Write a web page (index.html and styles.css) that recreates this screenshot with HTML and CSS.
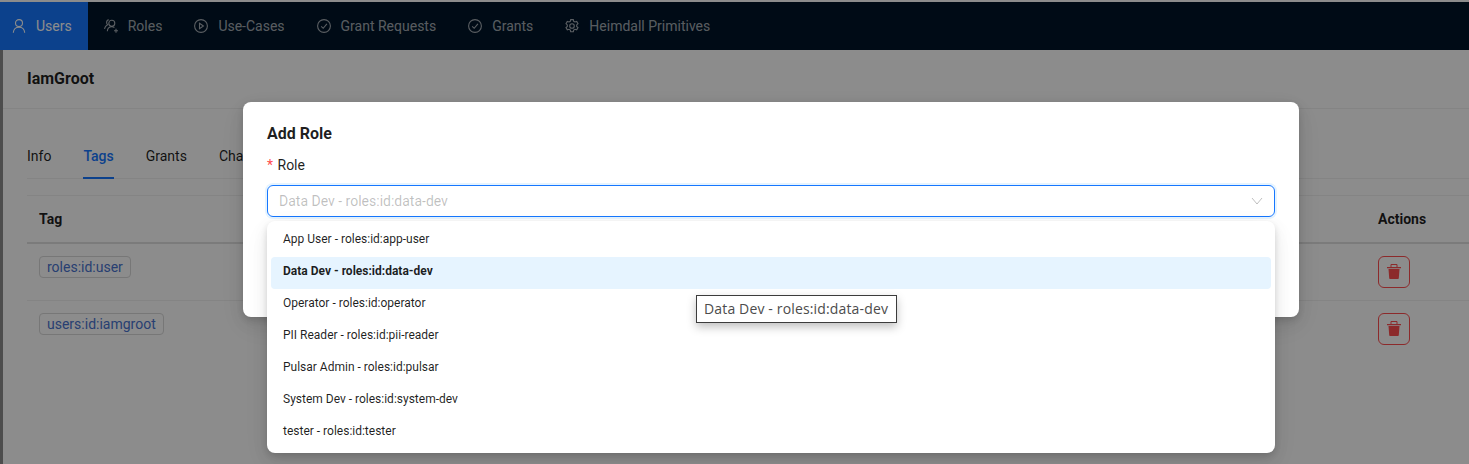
FILE: index.html
```html
<!DOCTYPE html>
<html>
<head>
    <meta charset="UTF-8">
    <meta name="viewport" content="width=device-width, initial-scale=1.0">
    <title>Users - IamGroot</title>
    <link rel="stylesheet" href="styles.css">
</head>
<body>
    <nav class="topnav">
        <a class="nav-item active">
            <svg class="nav-icon" viewBox="0 0 14 14"><circle cx="7" cy="4.100" r="3.500"/><path d="M1.300 13.800c.1-3.300 2.500-5.700 5.700-5.700s5.600 2.400 5.700 5.700"/></svg>
            Users
        </a>
        <a class="nav-item">
            <svg class="nav-icon" viewBox="0 0 14 14"><circle cx="7.800" cy="4.300" r="3"/><path d="M3.300 12.300c.2-2.700 2-4.600 4.500-4.600 1 0 1.900.3 2.600.8M4.800.8C3.500 1 2.600 2.100 2.600 3.500c0 .9.400 1.700 1 2.200C1.900 6.500.8 8 .5 9.800M10 11.700h4M12 9.700v4"/></svg>
            Roles
        </a>
        <a class="nav-item">
            <svg class="nav-icon" viewBox="0 0 14 14"><circle cx="7" cy="7" r="6.400"/><path d="M5.500 4.300 9.400 7l-3.900 2.700z"/></svg>
            Use-Cases
        </a>
        <a class="nav-item">
            <svg class="nav-icon" viewBox="0 0 14 14"><circle cx="7" cy="7" r="6.400"/><path d="M4.200 7.300 6.200 9.300 9.900 4.900"/></svg>
            Grant Requests
        </a>
        <a class="nav-item">
            <svg class="nav-icon" viewBox="0 0 14 14"><circle cx="7" cy="7" r="6.400"/><path d="M4.200 7.300 6.200 9.300 9.900 4.900"/></svg>
            Grants
        </a>
        <a class="nav-item">
            <svg class="nav-icon" viewBox="0 0 14 14"><circle cx="7" cy="7" r="2.300"/><path d="M5.700.6h2.600l.4 1.700 1.300.7 1.700-.5 1.300 2.200-1.300 1.200v1.500l1.300 1.200-1.300 2.200-1.700-.5-1.300.7-.4 1.700H5.700l-.4-1.700-1.300-.7-1.700.5-1.300-2.200 1.300-1.200V5.900L1 4.700l1.300-2.200 1.700.5 1.300-.7z"/></svg>
            Heimdall Primitives
        </a>
    </nav>

    <main class="content">
        <h1 class="page-title">IamGroot</h1>
        <div class="tabs">
            <span class="tab">Info</span>
            <span class="tab tab-active">Tags</span>
            <span class="tab">Grants</span>
            <span class="tab">Changes</span>
        </div>
        <table class="tag-table">
            <thead>
                <tr><th>Tag</th><th class="col-actions">Actions</th></tr>
            </thead>
            <tbody>
                <tr>
                    <td><span class="tag">roles:id:user</span></td>
                    <td class="col-actions"><button class="del-btn"><svg viewBox="0 0 14 15"><path d="M3.500 3V1.100C3.500.5 4 0 4.600 0h4.800c.6 0 1.100.5 1.100 1.100V3h-1V1H4.500v2zM0 3h14v1.300H0zM1.500 5h11l-.7 9c0 .6-.5 1-1 1H3.200c-.5 0-1-.4-1-1z"/></svg></button></td>
                </tr>
                <tr>
                    <td><span class="tag">users:id:iamgroot</span></td>
                    <td class="col-actions"><button class="del-btn"><svg viewBox="0 0 14 15"><path d="M3.500 3V1.100C3.500.5 4 0 4.600 0h4.800c.6 0 1.100.5 1.100 1.100V3h-1V1H4.500v2zM0 3h14v1.300H0zM1.500 5h11l-.7 9c0 .6-.5 1-1 1H3.200c-.5 0-1-.4-1-1z"/></svg></button></td>
                </tr>
            </tbody>
        </table>
    </main>

    <div class="mask"></div>

    <section class="modal">
        <h2 class="modal-title">Add Role</h2>
        <label class="field-label"><span class="req">*</span> Role</label>
        <div class="select">
            <span class="select-value">Data Dev - roles:id:data-dev</span>
            <svg class="chevron" viewBox="0 0 12 12"><path d="M1 3 6 9l5-6"/></svg>
        </div>
    </section>

    <ul class="dropdown">
        <li>App User - roles:id:app-user</li>
        <li class="selected">Data Dev - roles:id:data-dev</li>
        <li>Operator - roles:id:operator</li>
        <li>PII Reader - roles:id:pii-reader</li>
        <li>Pulsar Admin - roles:id:pulsar</li>
        <li>System Dev - roles:id:system-dev</li>
        <li>tester - roles:id:tester</li>
    </ul>

    <div class="tooltip">Data Dev - roles:id:data-dev</div>
</body>
</html>
```

FILE: styles.css
```css
* {
    margin: 0;
    padding: 0;
    box-sizing: border-box;
}

html, body {
    height: 100%;
}

body {
    font-family: Roboto, "Liberation Sans", sans-serif;
    font-size: 14px;
    color: rgba(0, 0, 0, 0.88);
    background: #fff;
    overflow: hidden;
    padding-top: 2px;
}

/* top menu */
.topnav {
    display: flex;
    height: 48px;
    background: #001529;
}

.nav-item {
    display: flex;
    align-items: center;
    gap: 10px;
    padding: 0 16px;
    color: rgba(255, 255, 255, 0.65);
}

.nav-item.active {
    background: #1677ff;
    color: #fff;
    padding-left: 12px;
}

.nav-icon {
    width: 14px;
    height: 14px;
    fill: none;
    stroke: currentColor;
    stroke-width: 1.1;
}

/* page behind the dialog */
.content {
    border-left: 3px solid #8c8c8c;
    padding-left: 24px;
    height: 414px;
}

.page-title {
    font-size: 16px;
    font-weight: 700;
    height: 59px;
    line-height: 57px;
    margin-left: -24px;
    padding-left: 24px;
    border-bottom: 1px solid #f0f0f0;
}

.tabs {
    display: flex;
    gap: 32px;
    margin-top: 25px;
    height: 45px;
    border-bottom: 1px solid #f0f0f0;
}

.tab {
    line-height: 44px;
    height: 45px;
}

.tab-active {
    color: #1677ff;
    font-weight: 500;
    border-bottom: 2px solid #1677ff;
}

.tag-table {
    width: 100%;
    margin-top: 16px;
    border-collapse: collapse;
}

.tag-table th {
    height: 47px;
    text-align: left;
    padding: 1px 12px 0;
    font-weight: 700;
    border-top: 1px solid #f0f0f0;
    border-bottom: 2px solid #e0e0e0;
}

.tag-table td {
    padding: 12px;
    vertical-align: top;
    border-bottom: 1px solid #f0f0f0;
}

.tag-table tbody tr:last-child td {
    border-bottom: none;
}

.col-actions {
    width: 103px;
}

.tag {
    display: inline-block;
    height: 22px;
    line-height: 20px;
    padding: 0 7px;
    color: #4a74d0;
    border: 1px solid #d9d9d9;
    border-radius: 4px;
}

.del-btn {
    display: flex;
    align-items: center;
    justify-content: center;
    width: 32px;
    height: 32px;
    background: transparent;
    border: 1px solid #ff4d4f;
    border-radius: 6px;
}

.del-btn svg {
    width: 14px;
    height: 15px;
    fill: #ff4d4f;
}

/* dialog */
.mask {
    position: absolute;
    inset: 0;
    background: rgba(0, 0, 0, 0.45);
}

.modal {
    position: absolute;
    left: 243px;
    top: 102px;
    width: 1056px;
    height: 215px;
    padding: 20px 24px;
    background: #fff;
    border-radius: 8px;
    box-shadow: 0 6px 16px rgba(0, 0, 0, 0.08), 0 3px 6px rgba(0, 0, 0, 0.12), 0 9px 28px rgba(0, 0, 0, 0.05);
}

.modal-title {
    font-size: 16px;
    font-weight: 700;
    line-height: 24px;
}

.field-label {
    display: block;
    line-height: 22px;
    margin-top: 8px;
    height: 31px;
}

.req {
    color: #ff4d4f;
    margin-right: 1px;
}

.select {
    display: flex;
    align-items: center;
    justify-content: space-between;
    height: 32px;
    padding: 0 11px;
    border: 1px solid #1677ff;
    border-radius: 6px;
    box-shadow: 0 0 0 2px rgba(5, 145, 255, 0.1);
}

.select-value {
    color: rgba(0, 0, 0, 0.25);
}

.chevron {
    width: 12px;
    height: 12px;
    fill: none;
    stroke: rgba(0, 0, 0, 0.25);
    stroke-width: 1;
}

.dropdown {
    position: absolute;
    left: 267px;
    top: 221px;
    width: 1008px;
    height: 232px;
    padding: 4px;
    list-style: none;
    background: #fff;
    border-radius: 8px;
    font-size: 12px;
    box-shadow: 0 6px 16px rgba(0, 0, 0, 0.08), 0 3px 6px rgba(0, 0, 0, 0.12), 0 9px 28px rgba(0, 0, 0, 0.05);
}

.dropdown li {
    height: 32px;
    line-height: 28px;
    padding: 0 12px;
    border-radius: 4px;
}

.dropdown .selected {
    font-weight: 700;
    background: #e6f4ff;
}

/* native title tooltip */
.tooltip {
    position: absolute;
    left: 696px;
    top: 295px;
    width: 201px;
    height: 28px;
    padding-left: 7px;
    line-height: 26px;
    font-family: "Open Sans", sans-serif;
    font-size: 14px;
    letter-spacing: 0.15px;
    color: #4c4c4c;
    background: #fff;
    border: 1px solid #3c3c3c;
    box-shadow: 0 4px 10px rgba(0, 0, 0, 0.25);
}
```
